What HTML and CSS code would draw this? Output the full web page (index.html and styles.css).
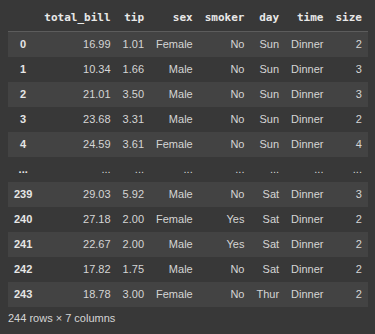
FILE: index.html
```html
<!DOCTYPE html>
<html lang="en">
<head>
  <meta charset="UTF-8" />
  <meta name="viewport" content="width=device-width, initial-scale=1.0"/>
  <title>tips</title>
  <link rel="stylesheet" href="styles.css">
</head>
<body>
  <div class="output">
    <table class="dataframe">
      <thead>
        <tr>
          <th></th>
          <th>total_bill</th>
          <th>tip</th>
          <th>sex</th>
          <th>smoker</th>
          <th>day</th>
          <th>time</th>
          <th>size</th>
        </tr>
      </thead>
      <tbody>
        <tr><th>0</th><td>16.99</td><td>1.01</td><td>Female</td><td>No</td><td>Sun</td><td>Dinner</td><td>2</td></tr>
        <tr><th>1</th><td>10.34</td><td>1.66</td><td>Male</td><td>No</td><td>Sun</td><td>Dinner</td><td>3</td></tr>
        <tr><th>2</th><td>21.01</td><td>3.50</td><td>Male</td><td>No</td><td>Sun</td><td>Dinner</td><td>3</td></tr>
        <tr><th>3</th><td>23.68</td><td>3.31</td><td>Male</td><td>No</td><td>Sun</td><td>Dinner</td><td>2</td></tr>
        <tr><th>4</th><td>24.59</td><td>3.61</td><td>Female</td><td>No</td><td>Sun</td><td>Dinner</td><td>4</td></tr>
        <tr><th>...</th><td>...</td><td>...</td><td>...</td><td>...</td><td>...</td><td>...</td><td>...</td></tr>
        <tr><th>239</th><td>29.03</td><td>5.92</td><td>Male</td><td>No</td><td>Sat</td><td>Dinner</td><td>3</td></tr>
        <tr><th>240</th><td>27.18</td><td>2.00</td><td>Female</td><td>Yes</td><td>Sat</td><td>Dinner</td><td>2</td></tr>
        <tr><th>241</th><td>22.67</td><td>2.00</td><td>Male</td><td>Yes</td><td>Sat</td><td>Dinner</td><td>2</td></tr>
        <tr><th>242</th><td>17.82</td><td>1.75</td><td>Male</td><td>No</td><td>Sat</td><td>Dinner</td><td>2</td></tr>
        <tr><th>243</th><td>18.78</td><td>3.00</td><td>Female</td><td>No</td><td>Thur</td><td>Dinner</td><td>2</td></tr>
      </tbody>
    </table>
    <p class="shape">244 rows × 7 columns</p>
  </div>
</body>
</html>
```

FILE: styles.css
```css
* { box-sizing: border-box; }
body {
  margin: 0;
  padding: 0 8px;
  background: #383838;
  color: #d5d5d5;
  font-family: 'Liberation Sans', Arial, sans-serif;
  font-size: 11px;
}
.dataframe {
  border-collapse: collapse;
  border-spacing: 0;
}
.dataframe th, .dataframe td {
  padding: 6px;
  line-height: 13px;
  text-align: right;
  white-space: nowrap;
}
.dataframe thead th {
  font-family: 'DejaVu Sans Mono', monospace;
  font-weight: 700;
  color: #e8e8e8;
  padding: 11px 6px 7px;
  border-bottom: 1px solid #5c5c5c;
}
.dataframe tbody th {
  font-weight: 700;
  color: #e6e6e6;
  text-align: center;
}
.dataframe tbody tr:nth-child(odd) { background: #434343; }
.shape {
  margin: 5px 0 0;
  line-height: 13px;
}
```
